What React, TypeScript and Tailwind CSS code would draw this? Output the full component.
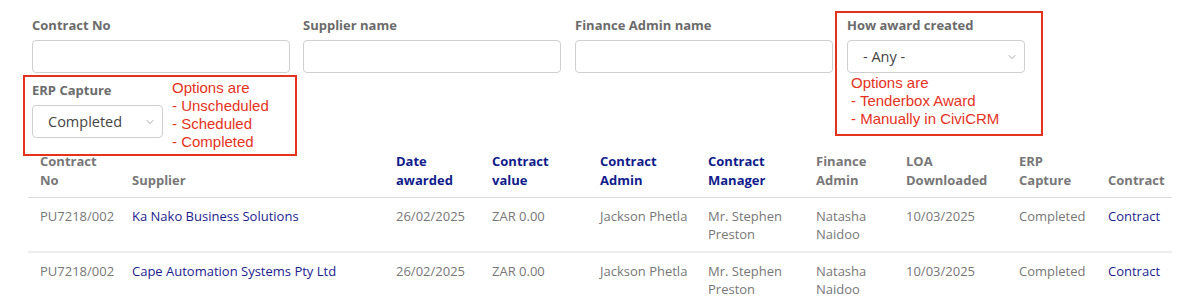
import { ChevronDown } from 'lucide-react';

interface Row { no: string; supplier: string; date: string; value: string; admin: string; manager: string; finance: string; loa: string; erp: string; }

const rows: Row[] = [
  { no: 'PU7218/002', supplier: 'Ka Nako Business Solutions', date: '26/02/2025', value: 'ZAR 0.00', admin: 'Jackson Phetla', manager: 'Mr. Stephen Preston', finance: 'Natasha Naidoo', loa: '10/03/2025', erp: 'Completed' },
  { no: 'PU7218/002', supplier: 'Cape Automation Systems Pty Ltd', date: '26/02/2025', value: 'ZAR 0.00', admin: 'Jackson Phetla', manager: 'Mr. Stephen Preston', finance: 'Natasha Naidoo', loa: '10/03/2025', erp: 'Completed' },
];

const columns: { label: string; width: string; sortable: boolean }[] = [
  { label: 'Contract No', width: 'w-[92px]', sortable: false },
  { label: 'Supplier', width: 'w-[264px]', sortable: false },
  { label: 'Date awarded', width: 'w-[96px]', sortable: true },
  { label: 'Contract value', width: 'w-[108px]', sortable: true },
  { label: 'Contract Admin', width: 'w-[108px]', sortable: true },
  { label: 'Contract Manager', width: 'w-[108px]', sortable: true },
  { label: 'Finance Admin', width: 'w-[90px]', sortable: false },
  { label: 'LOA Downloaded', width: 'w-[113px]', sortable: false },
  { label: 'ERP Capture', width: 'w-[89px]', sortable: false },
  { label: 'Contract', width: 'w-[76px]', sortable: false },
];

function Label({ children }: { children: React.ReactNode }) {
  return <label className="block text-[13px] leading-[18px] font-bold text-[#6b6b6b] mb-[6px]">{children}</label>;
}

function TextField({ label }: { label: string }) {
  return (
    <div className="w-[258px]">
      <Label>{label}</Label>
      <input type="text" className="w-full h-[33px] rounded-[4px] border border-[#cfcfcf] bg-white outline-none" />
    </div>
  );
}

function FakeSelect({ value, width }: { value: string; width: string }) {
  return (
    <div className={`${width} h-[33px] rounded-[4px] border border-[#cfcfcf] bg-white flex items-center justify-between pl-[15px] pr-[6px]`}>
      <span className="text-[14.5px] text-[#444]">{value}</span>
      <ChevronDown size={12} strokeWidth={1.3} className="text-[#777]" />
    </div>
  );
}

const annotationFont = { fontFamily: '"Liberation Sans", Arial, sans-serif' };

export default function App() {
  return (
    <div className="w-[1200px] h-[306px] bg-white overflow-hidden" style={{ fontFamily: '"Open Sans", "Noto Sans", sans-serif' }}>
      {/* Filters */}
      <div className="flex items-start pl-[32px] pt-[11px]">
        <div className="w-[801px] pt-[5px]">
          <div className="flex gap-[13px]">
            <TextField label="Contract No" />
            <TextField label="Supplier name" />
            <div className="ml-[1px]">
              <TextField label="Finance Admin name" />
            </div>
          </div>
          <div className="-ml-[9px] mt-[2px] w-[274px] h-[81px] border-2 border-[#e5321c] flex pl-[7px] pt-[4px]">
            <div>
              <Label>ERP Capture</Label>
              <FakeSelect value="Completed" width="w-[131px]" />
            </div>
            <div className="ml-[9px] -mt-[2px] text-[15px] leading-[18px] text-[#e5321c]" style={annotationFont}>
              <div>Options are</div>
              <div>- Unscheduled</div>
              <div>- Scheduled</div>
              <div>- Completed</div>
            </div>
          </div>
        </div>
        <div className="ml-[2px] w-[208px] h-[125px] border-2 border-[#e5321c] pl-[10px] pt-[3px]">
          <Label>How award created</Label>
          <FakeSelect value="- Any -" width="w-[178px]" />
          <div className="pl-[4px] mt-[1px] text-[15px] leading-[18px] text-[#e5321c]" style={annotationFont}>
            <div>Options are</div>
            <div>- Tenderbox Award</div>
            <div>- Manually in CiviCRM</div>
          </div>
        </div>
      </div>

      {/* Results */}
      <table className="ml-[28px] -mt-[4px] w-[1144px] table-fixed border-collapse text-[13px]">
        <colgroup>
          {columns.map(c => <col key={c.label} className={c.width} />)}
        </colgroup>
        <thead>
          <tr className="border-b border-[#dcdcdc]">
            {columns.map(c => (
              <th key={c.label} className={`text-left align-bottom font-bold leading-[19px] pl-[12px] pr-[4px] pb-[7px] ${c.sortable ? 'text-[#101c8c]' : 'text-[#777]'}`}>
                {c.label}
              </th>
            ))}
          </tr>
        </thead>
        <tbody>
          {rows.map((r, i) => (
            <tr key={i} className={i > 0 ? 'border-t-2 border-[#ececec]' : ''}>
              <td className="align-top leading-[18px] pl-[12px] pr-[4px] pt-[9px] pb-[8px] text-[#777]">{r.no}</td>
              <td className="align-top leading-[18px] pl-[12px] pr-[4px] pt-[9px] pb-[8px] text-[#1c1c8f]">{r.supplier}</td>
              <td className="align-top leading-[18px] pl-[12px] pr-[4px] pt-[9px] pb-[8px] text-[#777]">{r.date}</td>
              <td className="align-top leading-[18px] pl-[12px] pr-[4px] pt-[9px] pb-[8px] text-[#777]">{r.value}</td>
              <td className="align-top leading-[18px] pl-[12px] pr-[4px] pt-[9px] pb-[8px] text-[#777]">{r.admin}</td>
              <td className="align-top leading-[18px] pl-[12px] pr-[4px] pt-[9px] pb-[8px] text-[#777]">{r.manager}</td>
              <td className="align-top leading-[18px] pl-[12px] pr-[4px] pt-[9px] pb-[8px] text-[#777]">{r.finance}</td>
              <td className="align-top leading-[18px] pl-[12px] pr-[4px] pt-[9px] pb-[8px] text-[#777]">{r.loa}</td>
              <td className="align-top leading-[18px] pl-[12px] pr-[4px] pt-[9px] pb-[8px] text-[#777]">{r.erp}</td>
              <td className="align-top leading-[18px] pl-[12px] pr-[4px] pt-[9px] pb-[8px] text-[#1c1c8f]">Contract</td>
            </tr>
          ))}
        </tbody>
      </table>
    </div>
  );
}
